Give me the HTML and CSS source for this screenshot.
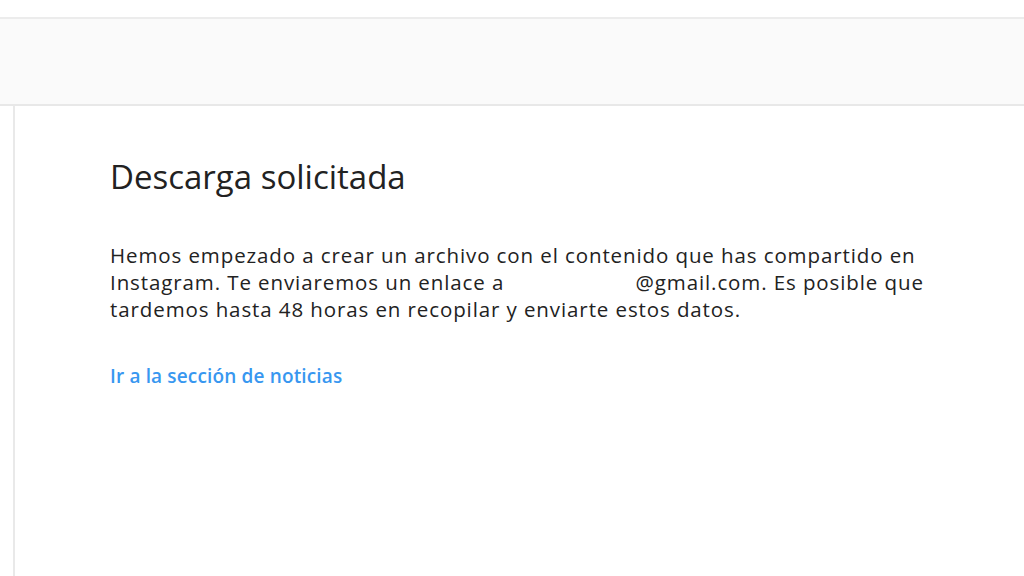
FILE: index.html
```html
<!DOCTYPE html>
<html lang="es">
<head>
<meta charset="utf-8">
<link rel="stylesheet" href="styles.css">
</head>
<body>
<div class="topgap"></div>
<header class="bar"></header>
<div class="layout">
  <aside class="side"></aside>
  <main class="content">
    <h1 class="title">Descarga solicitada</h1>
    <p class="text">Hemos empezado a crear un archivo con el contenido que has compartido en<br>Instagram. Te enviaremos un enlace a <span class="blank"></span>@gmail.com. Es posible que<br>tardemos hasta 48 horas en recopilar y enviarte estos datos.</p>
    <a class="link" href="#">Ir a la sección de noticias</a>
  </main>
</div>
</body>
</html>
```
FILE: styles.css
```css
html, body { margin: 0; padding: 0; background: #fff; }
body { font-family: "Open Sans", "Noto Sans", sans-serif; color: #262626; height: 576px; overflow: hidden; }
.topgap { height: 17px; background: #fff; }
.bar { height: 85px; background: #fafafa; border-top: 2px solid #ececec; border-bottom: 2px solid #e8e8e8; }
.layout { display: flex; height: 470px; }
.side { width: 13px; border-right: 2px solid #e9e9e9; }
.content { padding: 51px 0 0 95px; }
.title { margin: 0; font-weight: 400; font-size: 33px; line-height: 40px; color: #222; }
.text { margin: 45px 0 0; width: 900px; font-size: 20.5px; letter-spacing: 0.9px; line-height: 27px; color: #222; white-space: nowrap; }
.blank { display: inline-block; width: 125px; }
.link { display: inline-block; margin-top: 40px; font-size: 19px; letter-spacing: 0.15px; line-height: 26px; font-weight: 600; color: #3897f0; text-decoration: none; }
```
